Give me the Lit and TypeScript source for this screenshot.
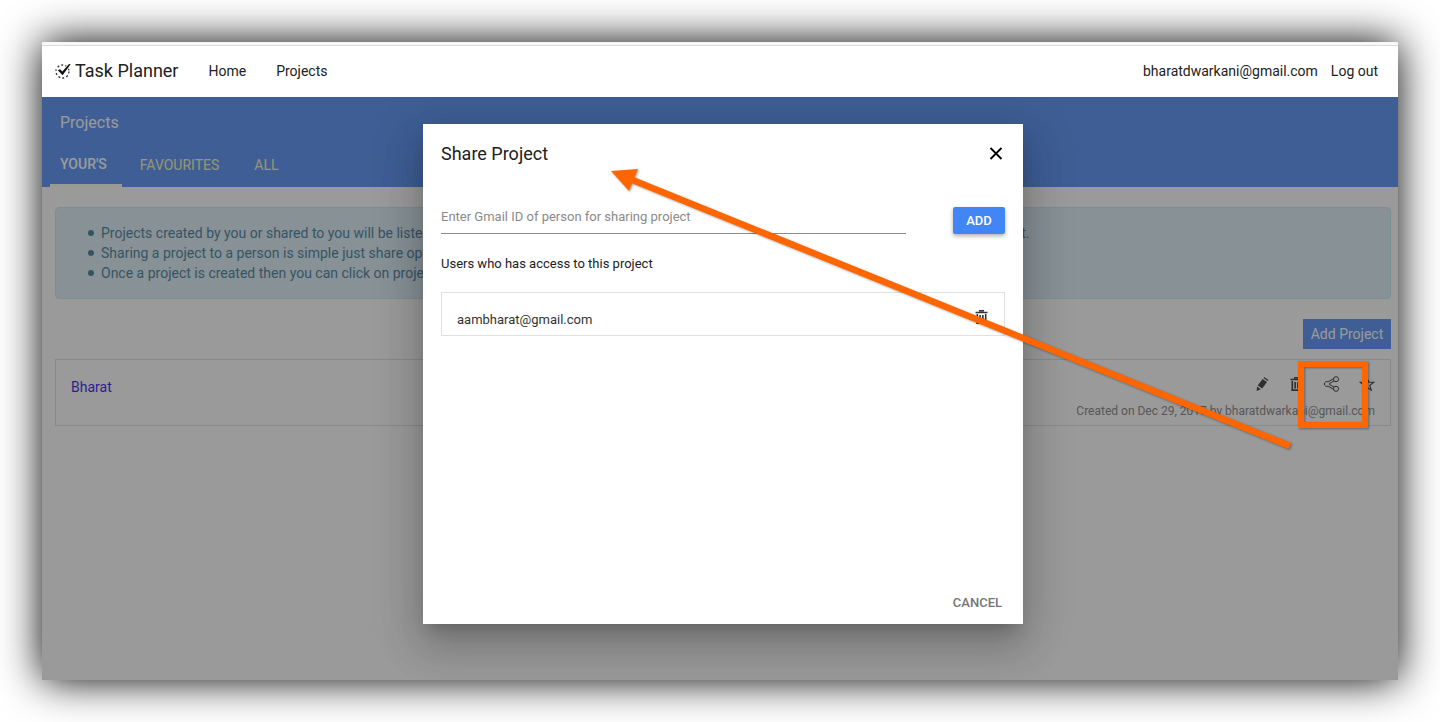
import { LitElement, html, css, svg } from "lit";
import { customElement, state } from "lit/decorators.js";

const trashIcon = svg`
  <svg width="14" height="14" viewBox="0 0 14 14" aria-hidden="true">
    <path d="M1.500 2.500h12M5 .7h5" fill="none" stroke="currentColor" stroke-width="1.4" />
    <path d="M3.300 4v9.500h8.400V4M6.100 5v6.500M8.900 5v6.500" fill="none" stroke="currentColor" stroke-width="1.6" />
    <path d="M2.500 13.200h10" stroke="currentColor" stroke-width="1.6" />
  </svg>`;

const pencilIcon = svg`
  <svg width="14" height="14" viewBox="0 0 14 14" aria-hidden="true">
    <g fill="currentColor">
      <path d="M7.6 1.9L12 5 7.2 11.500 2.800 8.400z" />
      <path d="M8.500 .9L9.200 0 13.500 2.900 12.800 4z" />
      <path d="M2 9.500l3.800 2.700-4.100 1.800z" />
    </g>
  </svg>`;

const shareIcon = svg`
  <svg width="16" height="16" viewBox="0 0 16 16" aria-hidden="true">
    <g fill="none" stroke="currentColor" stroke-width="1">
      <circle cx="13" cy="3.2" r="2.500" />
      <circle cx="13" cy="12.800" r="2.500" />
      <path d="M10.700 2.600L5 5.900A2.400 2.400 0 1 0 5 10.100L10.700 13.400M11 4.900L6.400 7.600v.8l4.600 2.700" />
    </g>
  </svg>`;

const starIcon = svg`
  <svg width="16" height="16" viewBox="0 0 16 16" aria-hidden="true">
    <path d="M8 1.500L9.700 6.100 14.800 6.300 10.800 9.400 12.300 14.200 8 11.400 3.700 14.200 5.200 9.400 1.200 6.300 6.300 6.100z"
      fill="none" stroke="currentColor" stroke-width="1.1" />
  </svg>`;

@customElement("app-root")
export class AppRoot extends LitElement {
  @state() private users = ["aambharat@gmail.com"];

  static styles = css`
    :host {
      display: block;
      box-sizing: border-box;
      min-height: 100vh;
      padding: 42px;
      background: #fff;
      color: #212121;
      font: 14px/20px Roboto, sans-serif;
    }
    * { box-sizing: border-box; }
    a { color: inherit; text-decoration: none; }
    button {
      border: 0;
      padding: 0;
      background: none;
      color: inherit;
      font: inherit;
      cursor: pointer;
    }
    svg { display: block; }
    h1, h2, p, ul { margin: 0; font-weight: 400; }

    .window {
      position: relative;
      display: flex;
      flex-direction: column;
      min-height: calc(100vh - 84px);
      background: #fff;
      box-shadow: 0 0 40px #000;
    }
    .chrome {
      height: 4px;
      background: #f8f8f8;
      border-bottom: 1px solid #dcdcdc;
    }
    .navbar {
      display: flex;
      align-items: center;
      height: 51px;
      padding: 0 20px 2px 13px;
    }
    .brand {
      display: flex;
      align-items: center;
      gap: 4px;
      margin-right: 30px;
      font-size: 18px;
    }
    .links { display: flex; gap: 30px; }
    .account { display: flex; gap: 13px; margin-left: auto; }

    .stage { display: grid; flex: 1; }
    .page, .backdrop { grid-area: 1 / 1; min-width: 0; }

    .banner { height: 90px; background: #4285f4; color: #fff; }
    .banner-title {
      padding: 16px 18px 0;
      font-size: 16px;
    }
    .tabs {
      display: flex;
      margin-top: 9px;
      padding-left: 8px;
    }
    .tab {
      height: 45px;
      padding: 1px 17px 0 18px;
      color: #f6f6ae;
    }
    .tab.active {
      padding: 2px 15px 0 10px;
      border-bottom: 3px solid #fffdf0;
      color: #fff;
      font-weight: 500;
    }
    .content { padding: 20px 7px 20px 13px; }
    .notice {
      padding: 15px;
      border: 1px solid #bce8f1;
      border-radius: 4px;
      background: #d9edf7;
      color: #31708f;
    }
    .notice ul { padding-left: 17px; list-style: none; }
    .notice li {
      display: flex;
      align-items: center;
      gap: 7px;
    }
    .notice li::before {
      flex: none;
      width: 6px;
      height: 6px;
      border-radius: 50%;
      background: #31708f;
      content: "";
    }
    .toolbar { display: flex; justify-content: flex-end; margin: 20px 0 10px; }
    .add-project {
      width: 88px;
      height: 30px;
      background: #4285f4;
      color: #fff;
    }
    .card {
      display: flex;
      justify-content: space-between;
      height: 67px;
      padding: 16px 15px 4px;
      border: 1px solid #ddd;
    }
    .card-link { align-self: flex-start; margin-top: 1px; color: #1800ee; }
    .card-side { display: flex; flex-direction: column; align-items: flex-end; gap: 9px; }
    .actions { display: flex; align-items: center; gap: 20px; height: 16px; }
    .meta { color: #757575; font-size: 12px; }

    .backdrop {
      display: flex;
      align-items: flex-start;
      justify-content: center;
      padding: 27px 0 27px 6px;
      background: rgba(59, 59, 59, 0.515);
      z-index: 1;
      overflow: hidden;
    }
    .dialog {
      display: flex;
      flex-direction: column;
      width: 600px;
      max-width: 100%;
      min-height: 500px;
      padding: 18px 18px 11px;
      background: #fff;
      font-size: 13px;
      box-shadow:
        0 11px 15px -7px rgba(0, 0, 0, 0.2),
        0 24px 38px 3px rgba(0, 0, 0, 0.14),
        0 9px 46px 8px rgba(0, 0, 0, 0.12);
    }
    .dialog-head {
      display: flex;
      align-items: center;
      justify-content: space-between;
      margin-bottom: 41px;
      line-height: 24px;
    }
    .dialog-title { font-size: 18px; }
    .invite { display: flex; gap: 47px; }
    .email {
      flex: 1;
      min-width: 0;
      height: 27px;
      padding: 0 0 8px;
      border: 0;
      border-bottom: 1px solid #8c8c8c;
      border-radius: 0;
      outline: 0;
      background: none;
      color: #212121;
      font: inherit;
    }
    .email::placeholder { color: #8a8a8a; opacity: 1; }
    .add {
      width: 52px;
      height: 27px;
      border-radius: 2px;
      background: #4285f4;
      color: #fff;
      font-weight: 500;
      box-shadow: 0 2px 4px rgba(0, 0, 0, 0.32);
    }
    .caption { margin: 20px 0 18px; }
    .user {
      display: flex;
      align-items: flex-start;
      justify-content: space-between;
      padding: 17px 16px 5px 15px;
      border: 1px solid #e0e0e0;
      color: #333;
    }
    .dialog-foot {
      display: flex;
      justify-content: flex-end;
      margin-top: auto;
      padding-right: 3px;
      color: #757575;
      font-weight: 500;
    }

    .callout {
      position: absolute;
      top: 0;
      right: 0;
      z-index: 2;
      pointer-events: none;
      filter: drop-shadow(1px 1px 1px rgba(0, 0, 0, 0.35));
    }
  `;

  render() {
    return html`
      <div class="window">
        <div class="chrome"></div>
        <header class="navbar">
          <a class="brand" href="#">
            <svg width="16" height="16" viewBox="0 0 16 16" aria-hidden="true">
              <circle cx="7.500" cy="8.500" r="6.500" fill="none" stroke="#333" stroke-width="1.3" stroke-dasharray="2 2.080" />
              <path d="M2.500 7L5 6.400 7.300 8.800 14.200 .8 15.600 1.200 7.800 12z" fill="#fff" stroke="#fff" stroke-width="1.6" />
              <path d="M2.800 7.200L5 6.200 7.300 8.600 14 1 15.600 1.200 7.600 12.200z" fill="#111" />
            </svg>
            <span>Task Planner</span>
          </a>
          <nav class="links">
            <a href="#">Home</a>
            <a href="#">Projects</a>
          </nav>
          <div class="account">
            <span>bharatdwarkani@gmail.com</span>
            <a href="#">Log out</a>
          </div>
        </header>

        <div class="stage">
          <main class="page">
            <div class="banner">
              <h1 class="banner-title">Projects</h1>
              <div class="tabs" role="tablist">
                <button class="tab active" role="tab" aria-selected="true">YOUR'S</button>
                <button class="tab" role="tab" aria-selected="false">FAVOURITES</button>
                <button class="tab" role="tab" aria-selected="false">ALL</button>
              </div>
            </div>
            <div class="content">
              <div class="notice">
                <ul>
                  <li>Projects created by you or shared to you will be listed here. You can add a project, edit it, delete it or mark it as favourite by clicking the icons next to it.</li>
                  <li>Sharing a project to a person is simple just share option and enter the Gmail ID.</li>
                  <li>Once a project is created then you can click on project name to add tasks.</li>
                </ul>
              </div>
              <div class="toolbar">
                <button class="add-project">Add Project</button>
              </div>
              <article class="card">
                <a class="card-link" href="#">Bharat</a>
                <div class="card-side">
                  <div class="actions">
                    <button aria-label="Edit">${pencilIcon}</button>
                    <button aria-label="Delete">${trashIcon}</button>
                    <button aria-label="Share">${shareIcon}</button>
                    <button aria-label="Favourite">${starIcon}</button>
                  </div>
                  <p class="meta">Created on Dec 29, 2017 by bharatdwarkani@gmail.com</p>
                </div>
              </article>
            </div>
          </main>

          <div class="backdrop">
            <section class="dialog" role="dialog" aria-labelledby="share-title">
              <div class="dialog-head">
                <h2 class="dialog-title" id="share-title">Share Project</h2>
                <button aria-label="Close">
                  <svg width="18" height="18" viewBox="0 0 18 18" aria-hidden="true">
                    <path d="M3.500 3l11 11M14.500 3l-11 11" fill="none" stroke="#000" stroke-width="1.8" />
                  </svg>
                </button>
              </div>
              <div class="invite">
                <input class="email" type="email" aria-label="Gmail ID"
                  placeholder="Enter Gmail ID of person for sharing project" />
                <button class="add">ADD</button>
              </div>
              <p class="caption">Users who has access to this project</p>
              ${this.users.map(
                (user) => html`
                  <div class="user">
                    <span>${user}</span>
                    <button aria-label="Remove ${user}">${trashIcon}</button>
                  </div>`
              )}
              <div class="dialog-foot"><button>CANCEL</button></div>
            </section>
          </div>
        </div>

        <svg class="callout" width="800" height="420" viewBox="598 42 800 420" aria-hidden="true">
          <path d="M630 179L1290 446" stroke="#ff6600" stroke-width="6.500" />
          <path d="M611 171L638 169 629 191z" fill="#ff6600" />
          <rect x="1301" y="364" width="64" height="61" fill="none" stroke="#ff6600" stroke-width="6" />
        </svg>
      </div>
    `;
  }
}
